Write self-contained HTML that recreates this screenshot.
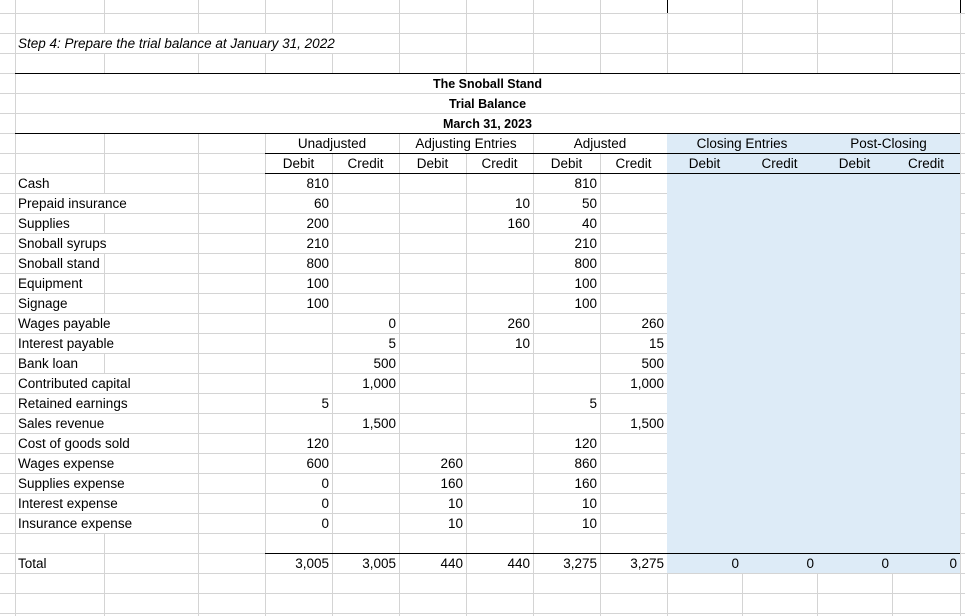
<!DOCTYPE html>
<html><head><meta charset="utf-8"><style>
body{margin:0;width:965px;height:616px;overflow:hidden;background:#fff;font-family:"Liberation Sans",Arial,sans-serif;font-size:13.5px;color:#000;position:relative}
.h{position:absolute;left:0;width:965px;height:1px;background:#d4d4d4}
.v{position:absolute;top:0;height:616px;width:1px;background:#d4d4d4}
.w{position:absolute;background:#fff}
.blue{position:absolute;left:667px;top:133px;width:293px;height:440px;background:#ddebf7}
.b{position:absolute;height:1px;background:#000}
.t{position:absolute;height:19px;line-height:20px;white-space:nowrap;background:#fff;padding-right:1px}
.r{position:absolute;height:20px;line-height:20px;text-align:right;width:64px}
.a{left:265px}.bb{left:332px}.c{left:399px}.d{left:466px}.e{left:533px}.f{left:600px}
.g{left:675px}.hh{left:750px}.i{left:825px}.j{left:893px}
.ctr{position:absolute;height:20px;line-height:20px;text-align:center}
.bold{font-weight:bold;font-size:12.5px}
</style></head><body>
<div class="h" style="top:13px"></div><div class="h" style="top:33px"></div><div class="h" style="top:53px"></div><div class="h" style="top:73px"></div><div class="h" style="top:93px"></div><div class="h" style="top:113px"></div><div class="h" style="top:133px"></div><div class="h" style="top:153px"></div><div class="h" style="top:173px"></div><div class="h" style="top:193px"></div><div class="h" style="top:213px"></div><div class="h" style="top:233px"></div><div class="h" style="top:253px"></div><div class="h" style="top:273px"></div><div class="h" style="top:293px"></div><div class="h" style="top:313px"></div><div class="h" style="top:333px"></div><div class="h" style="top:353px"></div><div class="h" style="top:373px"></div><div class="h" style="top:393px"></div><div class="h" style="top:413px"></div><div class="h" style="top:433px"></div><div class="h" style="top:453px"></div><div class="h" style="top:473px"></div><div class="h" style="top:493px"></div><div class="h" style="top:513px"></div><div class="h" style="top:533px"></div><div class="h" style="top:553px"></div><div class="h" style="top:573px"></div><div class="h" style="top:593px"></div><div class="h" style="top:613px"></div>
<div class="v" style="left:15px"></div><div class="v" style="left:104px"></div><div class="v" style="left:198px"></div><div class="v" style="left:265px"></div><div class="v" style="left:332px"></div><div class="v" style="left:399px"></div><div class="v" style="left:466px"></div><div class="v" style="left:533px"></div><div class="v" style="left:600px"></div><div class="v" style="left:667px"></div><div class="v" style="left:742px"></div><div class="v" style="left:817px"></div><div class="v" style="left:892px"></div><div class="v" style="left:960px"></div>
<div class="w" style="left:16px;top:34px;width:382px;height:19px"></div>
<div class="w" style="left:16px;top:74px;width:944px;height:19px"></div>
<div class="w" style="left:16px;top:94px;width:944px;height:19px"></div>
<div class="w" style="left:16px;top:114px;width:944px;height:19px"></div>
<div class="w" style="left:266px;top:134px;width:132px;height:19px"></div>
<div class="w" style="left:400px;top:134px;width:132px;height:19px"></div>
<div class="w" style="left:534px;top:134px;width:132px;height:19px"></div>
<div class="blue"></div>
<div class="b" style="left:15px;top:73px;width:945px"></div>
<div class="b" style="left:15px;top:133px;width:945px"></div>
<div class="b" style="left:265px;top:153px;width:695px"></div>
<div class="b" style="left:265px;top:173px;width:695px"></div>
<div class="b" style="left:265px;top:553px;width:695px"></div>
<div style="position:absolute;left:667px;top:0;width:1px;height:13px;background:#000"></div>
<div style="position:absolute;left:960px;top:0;width:1px;height:13px;background:#000"></div>

<div class="t" style="left:18px;top:34px;font-style:italic">Step 4: Prepare the trial balance at January 31, 2022</div>
<div class="ctr bold" style="left:15px;width:945px;top:74px">The Snoball Stand</div>
<div class="ctr bold" style="left:15px;width:945px;top:94px">Trial Balance</div>
<div class="ctr bold" style="left:15px;width:945px;top:114px">March 31, 2023</div>
<div class="ctr" style="left:265px;width:134px;top:134px">Unadjusted</div>
<div class="ctr" style="left:399px;width:134px;top:134px">Adjusting Entries</div>
<div class="ctr" style="left:533px;width:134px;top:134px">Adjusted</div>
<div class="ctr" style="left:667px;width:150px;top:134px">Closing Entries</div>
<div class="ctr" style="left:817px;width:143px;top:134px">Post-Closing</div>
<div class="ctr" style="left:265px;width:67px;top:154px">Debit</div>
<div class="ctr" style="left:332px;width:67px;top:154px">Credit</div>
<div class="ctr" style="left:399px;width:67px;top:154px">Debit</div>
<div class="ctr" style="left:466px;width:67px;top:154px">Credit</div>
<div class="ctr" style="left:533px;width:67px;top:154px">Debit</div>
<div class="ctr" style="left:600px;width:67px;top:154px">Credit</div>
<div class="ctr" style="left:667px;width:75px;top:154px">Debit</div>
<div class="ctr" style="left:742px;width:75px;top:154px">Credit</div>
<div class="ctr" style="left:817px;width:75px;top:154px">Debit</div>
<div class="ctr" style="left:892px;width:68px;top:154px">Credit</div>

<div class="t" style="left:18px;top:174px">Cash</div><div class="r a" style="top:174px">810</div><div class="r e" style="top:174px">810</div>
<div class="t" style="left:18px;top:194px">Prepaid insurance</div><div class="r a" style="top:194px">60</div><div class="r d" style="top:194px">10</div><div class="r e" style="top:194px">50</div>
<div class="t" style="left:18px;top:214px">Supplies</div><div class="r a" style="top:214px">200</div><div class="r d" style="top:214px">160</div><div class="r e" style="top:214px">40</div>
<div class="t" style="left:18px;top:234px">Snoball syrups</div><div class="r a" style="top:234px">210</div><div class="r e" style="top:234px">210</div>
<div class="t" style="left:18px;top:254px">Snoball stand</div><div class="r a" style="top:254px">800</div><div class="r e" style="top:254px">800</div>
<div class="t" style="left:18px;top:274px">Equipment</div><div class="r a" style="top:274px">100</div><div class="r e" style="top:274px">100</div>
<div class="t" style="left:18px;top:294px">Signage</div><div class="r a" style="top:294px">100</div><div class="r e" style="top:294px">100</div>
<div class="t" style="left:18px;top:314px">Wages payable</div><div class="r bb" style="top:314px">0</div><div class="r d" style="top:314px">260</div><div class="r f" style="top:314px">260</div>
<div class="t" style="left:18px;top:334px">Interest payable</div><div class="r bb" style="top:334px">5</div><div class="r d" style="top:334px">10</div><div class="r f" style="top:334px">15</div>
<div class="t" style="left:18px;top:354px">Bank loan</div><div class="r bb" style="top:354px">500</div><div class="r f" style="top:354px">500</div>
<div class="t" style="left:18px;top:374px">Contributed capital</div><div class="r bb" style="top:374px">1,000</div><div class="r f" style="top:374px">1,000</div>
<div class="t" style="left:18px;top:394px">Retained earnings</div><div class="r a" style="top:394px">5</div><div class="r e" style="top:394px">5</div>
<div class="t" style="left:18px;top:414px">Sales revenue</div><div class="r bb" style="top:414px">1,500</div><div class="r f" style="top:414px">1,500</div>
<div class="t" style="left:18px;top:434px">Cost of goods sold</div><div class="r a" style="top:434px">120</div><div class="r e" style="top:434px">120</div>
<div class="t" style="left:18px;top:454px">Wages expense</div><div class="r a" style="top:454px">600</div><div class="r c" style="top:454px">260</div><div class="r e" style="top:454px">860</div>
<div class="t" style="left:18px;top:474px">Supplies expense</div><div class="r a" style="top:474px">0</div><div class="r c" style="top:474px">160</div><div class="r e" style="top:474px">160</div>
<div class="t" style="left:18px;top:494px">Interest expense</div><div class="r a" style="top:494px">0</div><div class="r c" style="top:494px">10</div><div class="r e" style="top:494px">10</div>
<div class="t" style="left:18px;top:514px">Insurance expense</div><div class="r a" style="top:514px">0</div><div class="r c" style="top:514px">10</div><div class="r e" style="top:514px">10</div>

<div class="t" style="left:18px;top:554px">Total</div>
<div class="r a" style="top:554px">3,005</div><div class="r bb" style="top:554px">3,005</div><div class="r c" style="top:554px">440</div><div class="r d" style="top:554px">440</div><div class="r e" style="top:554px">3,275</div><div class="r f" style="top:554px">3,275</div>
<div class="r g" style="top:554px">0</div><div class="r hh" style="top:554px">0</div><div class="r i" style="top:554px">0</div><div class="r j" style="top:554px">0</div>
</body></html>
